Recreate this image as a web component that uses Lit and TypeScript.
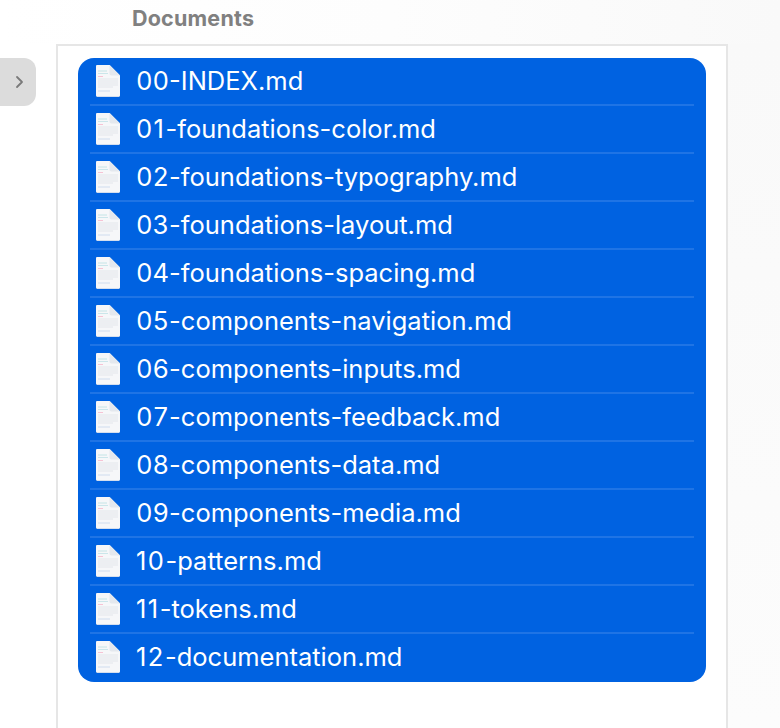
import { LitElement, html, css, svg } from "lit";
import { customElement } from "lit/decorators.js";

const FILES = [
  "00-INDEX.md",
  "01-foundations-color.md",
  "02-foundations-typography.md",
  "03-foundations-layout.md",
  "04-foundations-spacing.md",
  "05-components-navigation.md",
  "06-components-inputs.md",
  "07-components-feedback.md",
  "08-components-data.md",
  "09-components-media.md",
  "10-patterns.md",
  "11-tokens.md",
  "12-documentation.md",
];

const fileIcon = svg`<svg class="icon" width="26" height="34" viewBox="0 0 26 34" aria-hidden="true">
  <path d="M1 2.500C1 1.600 1.600 1 2.500 1H14.500L25 11.500V31.500c0 .9-.6 1.500-1.500 1.500H2.500C1.600 33 1 32.400 1 31.500Z" fill="#c9d6ea"/>
  <path d="M1 2.500C1 1.600 1.600 1 2.500 1H14.500L25 11.500V31C25 31.700 24.500 32.200 23.800 32.200H2.200C1.500 32.200 1 31.700 1 31Z" fill="#f6f7f9"/>
  <path d="M14.500 1V9.500c0 1.200.8 2 2 2H25Z" fill="#e4e8ee"/>
  <path d="M3 7h9" stroke="#c4e4e6" stroke-width="1"/>
  <path d="M3 9.500h10" stroke="#cbe6ea" stroke-width="1"/>
  <path d="M3 12.500h5" stroke="#f6c3d4" stroke-width="1"/>
  <path d="M3 15h20M3 17h20M3 19h20M3 21h20M3 23h15" stroke="#e3e6eb" stroke-width="1"/>
  <path d="M3 27h12" stroke="#cfdcee" stroke-width="1"/>
</svg>`;

@customElement("app-root")
export class AppRoot extends LitElement {
  static styles = css`
    :host {
      display: block;
      width: 780px;
      height: 728px;
      overflow: hidden;
      background: #fff;
      font-family: Inter, "Liberation Sans", sans-serif;
    }
    .header {
      height: 44px;
      box-sizing: border-box;
      padding: 5px 0 0 132px;
      font-size: 21.500px;
      line-height: 26px;
      font-weight: 700;
      letter-spacing: 0.2px;
      color: #808080;
      background: linear-gradient(to right, #fff 0%, #fdfdfd 50%, #f9f9f9 100%);
    }
    .body {
      display: flex;
      height: 684px;
    }
    .side {
      width: 56px;
      flex: none;
      padding-top: 14px;
      box-sizing: border-box;
    }
    .tab {
      width: 36px;
      height: 48px;
      background: #dcdcdc;
      border-radius: 0 12px 12px 0;
      display: flex;
      align-items: center;
      justify-content: flex-end;
      padding-right: 12px;
      box-sizing: border-box;
    }
    .panel {
      width: 672px;
      flex: none;
      box-sizing: border-box;
      border: 2px solid #e6e6e6;
      border-bottom: none;
      padding: 12px 20px 0 20px;
      background: #fff;
    }
    .list {
      background: #0062e1;
      border-radius: 16px;
      padding: 0 12px;
    }
    .row {
      height: 48px;
      box-sizing: border-box;
      display: flex;
      align-items: center;
      gap: 15px;
      padding-left: 5px;
      border-bottom: 2px solid #1f74e5;
      color: #fff;
      font-size: 25.500px;
      line-height: 30px;
      white-space: nowrap;
    }
    .num {
      font-variant-numeric: tabular-nums;
    }
    .num.one {
      font-variant-numeric: normal;
      letter-spacing: 1.500px;
    }
    .row:last-child {
      border-bottom-color: transparent;
    }
    .icon {
      flex: none;
      display: block;
    }
    .rest {
      flex: 1;
      background: linear-gradient(to bottom, #f9f9f9, #fcfcfc);
    }
  `;

  render() {
    return html`
      <div class="header">Documents</div>
      <div class="body">
        <div class="side">
          <div class="tab">
            <svg width="9" height="14" viewBox="0 0 9 14" aria-hidden="true">
              <path d="M2 2l5 5-5 5" fill="none" stroke="#7a7a7a" stroke-width="1.800" stroke-linecap="round" stroke-linejoin="round"/>
            </svg>
          </div>
        </div>
        <div class="panel">
          <div class="list">
            ${FILES.map((f) => {
              const prefix = f.slice(0, 2);
              return html`<div class="row">${fileIcon}<span><span class="num ${prefix.includes("1") ? "one" : ""}">${prefix}</span>${f.slice(2)}</span></div>`;
            })}
          </div>
        </div>
        <div class="rest"></div>
      </div>
    `;
  }
}
